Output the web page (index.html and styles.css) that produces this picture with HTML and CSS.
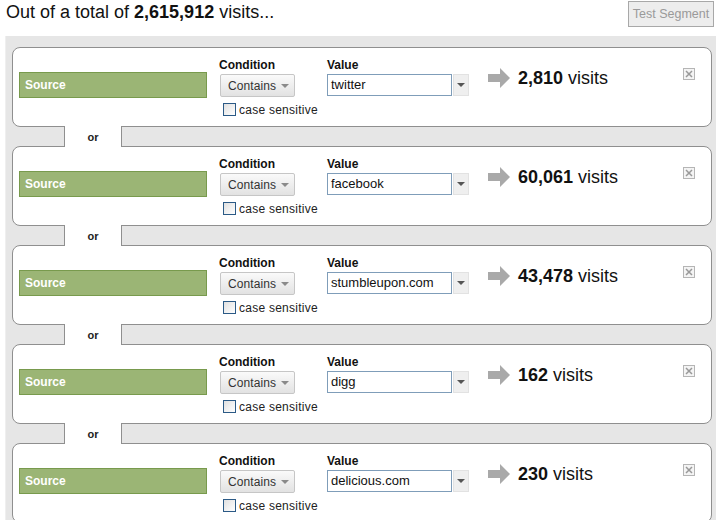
FILE: index.html
```html
<!DOCTYPE html>
<html>
<head>
<meta charset="utf-8">
<link rel="stylesheet" href="styles.css">
</head>
<body>
<div class="header">
  <div class="total">Out of a total of <b>2,615,912</b> visits...</div>
  <button class="test-btn">Test Segment</button>
</div>
<div class="segments">

  <div class="card">
    <div class="source">Source</div>
    <div class="cond">
      <div class="label">Condition</div>
      <div class="select">Contains <span class="tri"></span></div>
      <label class="check"><span class="box"></span>case sensitive</label>
    </div>
    <div class="val">
      <div class="label">Value</div>
      <div class="combo"><div class="input">twitter</div><div class="drop"><span class="tri dark"></span></div></div>
    </div>
    <div class="result">
      <svg class="arrow" width="22" height="20" viewBox="0 0 22 20"><path d="M0 6H12V0L22 10L12 20V14H0Z" fill="#a9a9a9"/></svg>
      <span class="count"><b>2,810</b> visits</span>
    </div>
    <div class="close"><svg width="12" height="12" viewBox="0 0 12 12"><rect x="0.5" y="0.5" width="11" height="11" fill="#f4f4f4" stroke="#b5b5b5"/><path d="M3 3L9 9M9 3L3 9" stroke="#999" stroke-width="1.5"/></svg></div>
  </div>
  <div class="or"><span>or</span></div>

  <div class="card">
    <div class="source">Source</div>
    <div class="cond">
      <div class="label">Condition</div>
      <div class="select">Contains <span class="tri"></span></div>
      <label class="check"><span class="box"></span>case sensitive</label>
    </div>
    <div class="val">
      <div class="label">Value</div>
      <div class="combo"><div class="input">facebook</div><div class="drop"><span class="tri dark"></span></div></div>
    </div>
    <div class="result">
      <svg class="arrow" width="22" height="20" viewBox="0 0 22 20"><path d="M0 6H12V0L22 10L12 20V14H0Z" fill="#a9a9a9"/></svg>
      <span class="count"><b>60,061</b> visits</span>
    </div>
    <div class="close"><svg width="12" height="12" viewBox="0 0 12 12"><rect x="0.5" y="0.5" width="11" height="11" fill="#f4f4f4" stroke="#b5b5b5"/><path d="M3 3L9 9M9 3L3 9" stroke="#999" stroke-width="1.5"/></svg></div>
  </div>
  <div class="or"><span>or</span></div>

  <div class="card">
    <div class="source">Source</div>
    <div class="cond">
      <div class="label">Condition</div>
      <div class="select">Contains <span class="tri"></span></div>
      <label class="check"><span class="box"></span>case sensitive</label>
    </div>
    <div class="val">
      <div class="label">Value</div>
      <div class="combo"><div class="input">stumbleupon.com</div><div class="drop"><span class="tri dark"></span></div></div>
    </div>
    <div class="result">
      <svg class="arrow" width="22" height="20" viewBox="0 0 22 20"><path d="M0 6H12V0L22 10L12 20V14H0Z" fill="#a9a9a9"/></svg>
      <span class="count"><b>43,478</b> visits</span>
    </div>
    <div class="close"><svg width="12" height="12" viewBox="0 0 12 12"><rect x="0.5" y="0.5" width="11" height="11" fill="#f4f4f4" stroke="#b5b5b5"/><path d="M3 3L9 9M9 3L3 9" stroke="#999" stroke-width="1.5"/></svg></div>
  </div>
  <div class="or"><span>or</span></div>

  <div class="card">
    <div class="source">Source</div>
    <div class="cond">
      <div class="label">Condition</div>
      <div class="select">Contains <span class="tri"></span></div>
      <label class="check"><span class="box"></span>case sensitive</label>
    </div>
    <div class="val">
      <div class="label">Value</div>
      <div class="combo"><div class="input">digg</div><div class="drop"><span class="tri dark"></span></div></div>
    </div>
    <div class="result">
      <svg class="arrow" width="22" height="20" viewBox="0 0 22 20"><path d="M0 6H12V0L22 10L12 20V14H0Z" fill="#a9a9a9"/></svg>
      <span class="count"><b>162</b> visits</span>
    </div>
    <div class="close"><svg width="12" height="12" viewBox="0 0 12 12"><rect x="0.5" y="0.5" width="11" height="11" fill="#f4f4f4" stroke="#b5b5b5"/><path d="M3 3L9 9M9 3L3 9" stroke="#999" stroke-width="1.5"/></svg></div>
  </div>
  <div class="or"><span>or</span></div>

  <div class="card">
    <div class="source">Source</div>
    <div class="cond">
      <div class="label">Condition</div>
      <div class="select">Contains <span class="tri"></span></div>
      <label class="check"><span class="box"></span>case sensitive</label>
    </div>
    <div class="val">
      <div class="label">Value</div>
      <div class="combo"><div class="input">delicious.com</div><div class="drop"><span class="tri dark"></span></div></div>
    </div>
    <div class="result">
      <svg class="arrow" width="22" height="20" viewBox="0 0 22 20"><path d="M0 6H12V0L22 10L12 20V14H0Z" fill="#a9a9a9"/></svg>
      <span class="count"><b>230</b> visits</span>
    </div>
    <div class="close"><svg width="12" height="12" viewBox="0 0 12 12"><rect x="0.5" y="0.5" width="11" height="11" fill="#f4f4f4" stroke="#b5b5b5"/><path d="M3 3L9 9M9 3L3 9" stroke="#999" stroke-width="1.5"/></svg></div>
  </div>

</div>
</body>
</html>
```
FILE: styles.css
```css
* { box-sizing: border-box; }
html, body { margin: 0; padding: 0; background: #fff; }
body { font-family: "Liberation Sans", Arial, sans-serif; color: #000; overflow: hidden; }

.header {
  display: flex;
  justify-content: space-between;
  align-items: flex-start;
  height: 36px;
  padding: 1px 2px 0 6px;
}
.total { font-size: 18px; line-height: 21px; padding-top: 1px; color: #111; }
.total b { font-weight: bold; }
.test-btn {
  font-family: "Liberation Sans", Arial, sans-serif;
  font-size: 12.5px;
  color: #9a9a9a;
  background: #ededed;
  border: 1px solid #a8a8a8;
  height: 26px;
  width: 86px;
  padding: 0;
  margin: 0;
}

.segments {
  margin-left: 5px;
  background: #e6e6e6;
  border-left: 1px solid #efefef;
  padding: 11px 4px 0 6px;
  height: 500px;
}

.card {
  display: flex;
  align-items: flex-start;
  height: 80px;
  background: #fff;
  border: 1px solid #8f8f8f;
  border-radius: 8px;
  padding: 10px 16px 0 6px;
}

.source {
  width: 188px;
  height: 26px;
  margin-top: 14px;
  background: #9bb575;
  border: 1px solid #789a4d;
  color: #fff;
  font-weight: bold;
  font-size: 12px;
  line-height: 24px;
  padding-left: 5px;
}

.label { font-weight: bold; font-size: 12px; line-height: 14px; height: 14px; color: #111; }

.cond { width: 108px; margin-left: 12px; }
.select {
  display: flex;
  align-items: center;
  width: 75px;
  height: 23px;
  margin: 2px 0 0 1px;
  padding-left: 7px;
  font-size: 12px;
  letter-spacing: 0.1px;
  color: #333;
  background: linear-gradient(#fafafa, #e2e2e2);
  border: 1px solid #c6c6c6;
  border-radius: 2px;
}
.tri {
  display: inline-block;
  width: 0; height: 0;
  border-left: 4px solid transparent;
  border-right: 4px solid transparent;
  border-top: 4px solid #8a8a8a;
  margin-left: 5px;
}
.tri.dark { border-top-color: #555; margin: 0; }

.check {
  display: flex;
  align-items: center;
  margin: 6px 0 0 4px;
  height: 13px;
  font-size: 12px;
  letter-spacing: 0.25px;
  color: #222;
}
.box {
  width: 13px; height: 13px;
  border: 1px solid #2b5a86;
  background: linear-gradient(135deg, #e0e0e0, #fff);
  margin-right: 3px;
}

.val { width: 142px; }
.combo { display: flex; margin-top: 2px; }
.input {
  width: 126px;
  height: 22px;
  border: 1px solid #7f9db9;
  font-size: 13px;
  line-height: 19px;
  padding-left: 3px;
  color: #111;
}
.drop {
  width: 16px;
  height: 22px;
  margin-left: 1px;
  background: #efefef;
  border: 1px solid #e2e2e2;
  display: flex;
  align-items: center;
  justify-content: center;
}

.result {
  display: flex;
  align-items: center;
  margin: 10px 0 0 19px;
  height: 20px;
}
.arrow { display: block; margin-right: 8px; }
.count { font-size: 18px; line-height: 20px; color: #111; }

.close { margin: 10px 0 0 auto; height: 12px; }
.close svg { display: block; }

.or {
  position: relative;
  z-index: 1;
  width: 58px;
  height: 21px;
  margin: -1px 0 -1px 52px;
  background: #fff;
  border-left: 1px solid #8f8f8f;
  border-right: 1px solid #8f8f8f;
  text-align: center;
  font-size: 11px;
  font-weight: bold;
  line-height: 21px;
  padding-top: 1px;
  color: #222;
}
```
